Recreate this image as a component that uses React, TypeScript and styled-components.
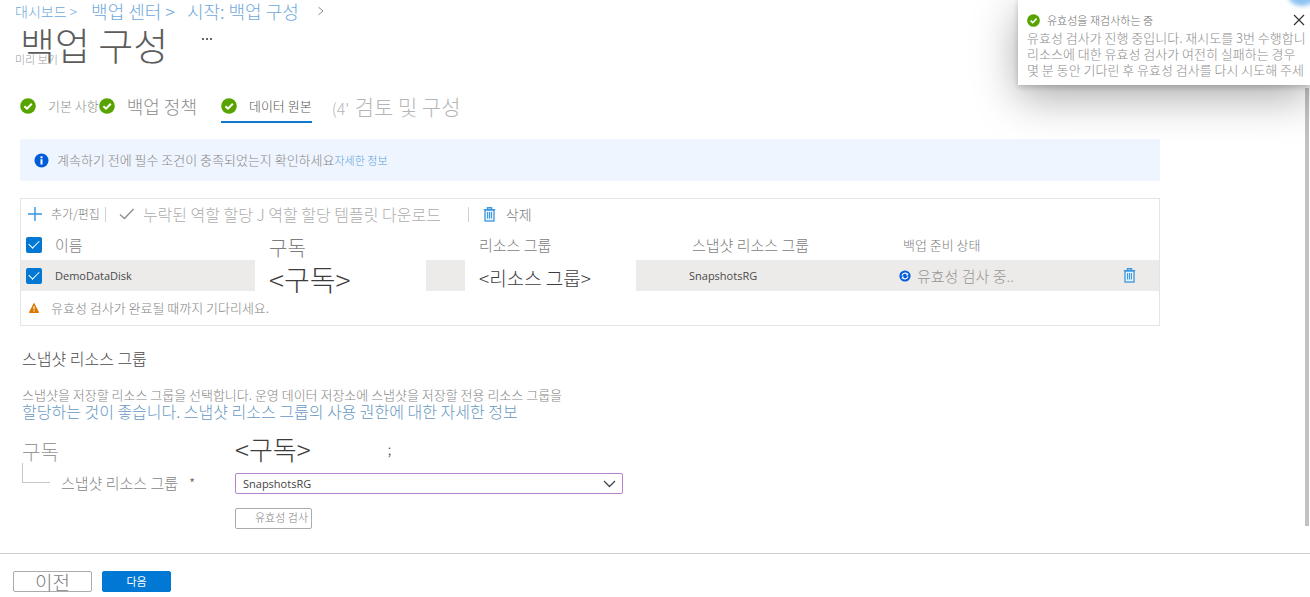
import React from 'react';
import styled, { createGlobalStyle } from 'styled-components';

const Global = createGlobalStyle`
  * { box-sizing: border-box; }
  html, body { margin: 0; padding: 0; background: #fff; }
  body {
    font-family: "Noto Sans CJK KR", sans-serif;
    font-weight: 300;
    color: #858585;
    overflow: hidden;
  }
  button, select, input { font-family: inherit; font-weight: inherit; }
  a { text-decoration: none; color: inherit; }
`;

type TextProps = { $size: number; $color?: string };

const Text = styled.span<TextProps>`
  font-size: ${(p) => p.$size}px;
  line-height: 20px;
  color: ${(p) => p.$color ?? 'inherit'};
  white-space: nowrap;
`;

const Page = styled.div`
  position: relative;
  display: flex;
  flex-direction: column;
  min-height: 100vh;
  overflow: hidden;
`;

const Main = styled.main`
  flex: 1;
  padding-right: 150px;
`;

const Breadcrumb = styled.nav`
  display: flex;
  align-items: center;
  height: 22px;
  padding-left: 15px;
  color: #6fa9dc;
  svg { margin-left: 18px; }
`;

const Crumb = styled.a<{ $size: number; $gap?: number }>`
  font-size: ${(p) => p.$size}px;
  line-height: 22px;
  margin-right: ${(p) => p.$gap ?? 0}px;
  white-space: nowrap;
`;

const TitleRow = styled.header`
  display: flex;
  align-items: flex-start;
  padding-left: 20px;
`;

const Title = styled.h1`
  margin: 0;
  font-size: 38px;
  font-weight: 300;
  line-height: 44px;
  color: #5c5c5c;
`;

const MoreButton = styled.button`
  margin: 7px 0 0 33px;
  padding: 0;
  border: 0;
  background: none;
  display: flex;
  height: 20px;
  align-items: center;
`;

const Preview = styled.div`
  margin-top: -14px;
  padding-left: 15px;
  font-size: 11px;
  line-height: 14px;
  color: #999;
`;

const Tabs = styled.nav`
  display: flex;
  height: 28px;
  margin: 29px 0 16px 20px;
`;

const Tab = styled.a<{ $size: number; $gap?: number; $active?: boolean; $color?: string }>`
  display: flex;
  align-items: center;
  height: 28px;
  padding-bottom: 4px;
  margin-right: ${(p) => p.$gap ?? 0}px;
  border-bottom: 2px solid ${(p) => (p.$active ? '#0f78d0' : 'transparent')};
  font-size: ${(p) => p.$size}px;
  line-height: 22px;
  color: ${(p) => p.$color ?? '#8c8c8c'};
  white-space: nowrap;
  svg { margin-right: 12px; }
`;

const StepNumber = styled.span`
  width: 23px;
`;

const Section = styled.div`
  max-width: 1140px;
  margin-left: 20px;
`;

const Banner = styled(Section)`
  display: flex;
  align-items: center;
  height: 42px;
  padding-left: 14px;
  background: #eff5ff;
  border-radius: 2px;
  svg { margin-right: 8px; }
`;

const Panel = styled(Section)`
  margin-top: 17px;
  height: 128px;
  border: 1px solid #e4e4e4;
`;

const Toolbar = styled.div`
  display: flex;
  align-items: center;
  height: 30px;
`;

const ToolButton = styled.button<{ $size: number; $gap: number; $color?: string }>`
  display: flex;
  align-items: center;
  gap: ${(p) => p.$gap}px;
  padding: 0;
  border: 0;
  background: none;
  font-size: ${(p) => p.$size}px;
  line-height: 20px;
  color: ${(p) => p.$color ?? '#7d7d7d'};
  white-space: nowrap;
`;

const AddButton = styled(ToolButton)`
  padding-left: 7px;
`;

const Divider = styled.span<{ $before: number; $after: number }>`
  width: 1px;
  height: 15px;
  background: #d2d2d2;
  margin: 0 ${(p) => p.$after}px 0 ${(p) => p.$before}px;
`;

const Table = styled.table`
  width: 100%;
  table-layout: fixed;
  border-collapse: collapse;
`;

const Col = styled.col<{ $width: number }>`
  width: ${(p) => p.$width}px;
`;

const HeadCell = styled.th<{ $size: number; $pad: number }>`
  height: 31px;
  padding: ${(p) => (p.$size === 20 ? 6 : 0)}px 0 0 ${(p) => p.$pad}px;
  font-size: ${(p) => p.$size}px;
  font-weight: 300;
  line-height: 20px;
  text-align: left;
  white-space: nowrap;
  color: #7d7d7d;
`;

const Cell = styled.td<{ $pad?: number }>`
  height: 31px;
  padding: 0 0 0 ${(p) => p.$pad ?? 0}px;
  background: #ecebe9;
  white-space: nowrap;
`;

const Latin = styled.div`
  font: 400 11px/20px "Open Sans", sans-serif;
  color: #4a4a4a;
`;

const Redacted = styled.div<{ $size: number; $top: number }>`
  width: 171px;
  height: 31px;
  padding: ${(p) => p.$top}px 0 0 14px;
  background: #fff;
  font-size: ${(p) => p.$size}px;
  line-height: 31px;
  color: #3d3d3d;
`;

const Inline = styled.div<{ $gap: number }>`
  display: flex;
  align-items: center;
  gap: ${(p) => p.$gap}px;
`;

const IconButton = styled.button`
  display: flex;
  padding: 0;
  border: 0;
  background: none;
`;

const Check = styled.input`
  appearance: none;
  width: 16px;
  height: 16px;
  margin: 0;
  border-radius: 2px;
  background: #0078d4;
  display: grid;
  place-items: center;
  &::after {
    content: "";
    width: 9px;
    height: 5px;
    margin-bottom: 3px;
    border-left: 1px solid #fff;
    border-bottom: 1px solid #fff;
    transform: rotate(-45deg);
  }
`;

const Warning = styled.div`
  display: flex;
  align-items: center;
  gap: 12px;
  height: 34px;
  padding-left: 8px;
`;

const Details = styled.section`
  padding: 21px 0 0 22px;
`;

const SubHeading = styled.h2`
  margin: 0 0 18px;
  font-size: 16px;
  font-weight: 300;
  line-height: 22px;
  color: #4a4a4a;
`;

const Para = styled.p`
  display: flex;
  flex-direction: column;
  margin: 0;
  line-height: 16px;
  font-size: 13px;
  white-space: nowrap;
  a { font-size: 16px; color: #6899c2; }
`;

const Form = styled.form`
  display: grid;
  grid-template-columns: 213px minmax(100px, 388px);
  grid-template-rows: 39px 24px;
  margin-top: 15px;
`;

const GroupLabel = styled.span`
  padding-top: 7px;
  font-size: 20px;
  line-height: 22px;
  color: #999;
`;

const Value = styled.div`
  display: flex;
  align-items: center;
  gap: 77px;
  height: 30px;
  font-size: 26px;
  line-height: 30px;
  color: #3d3d3d;
`;

const NestedLabel = styled.label`
  display: flex;
  align-items: flex-start;
  gap: 11px;
  height: 32px;
  font-size: 15px;
  line-height: 20px;
  white-space: nowrap;
`;

const Required = styled.span`
  font-size: 14px;
  color: #5c5c5c;
`;

const Branch = styled.span`
  width: 28px;
  height: 20px;
  margin-top: -10px;
  border-left: 1px solid #c8c8c8;
  border-bottom: 1px solid #c8c8c8;
`;

const SelectWrap = styled.div`
  display: grid;
  align-items: center;
  height: 21px;
  > * { grid-area: 1 / 1; }
  svg { justify-self: end; margin-right: 7px; pointer-events: none; }
`;

const Select = styled.select`
  appearance: none;
  width: 100%;
  height: 21px;
  padding: 0 24px 0 7px;
  border: 1px solid #b583cc;
  border-radius: 2px;
  background: #fff;
  font: 400 11px/18px "Open Sans", sans-serif;
  color: #444;
`;

const Button = styled.button<{ $width: number; $size: number; $primary?: boolean }>`
  width: ${(p) => p.$width}px;
  height: 21px;
  padding: 0;
  border: 1px solid ${(p) => (p.$primary ? '#0078d4' : '#ababab')};
  border-radius: 2px;
  background: ${(p) => (p.$primary ? '#0078d4' : '#fff')};
  color: ${(p) => (p.$primary ? '#fff' : '#7d7d7d')};
  font-size: ${(p) => p.$size}px;
  font-weight: ${(p) => (p.$primary ? 400 : 300)};
  line-height: 17px;
  white-space: nowrap;
`;

const ValidateButton = styled(Button)`
  grid-column: 2;
  margin-top: 11px;
  padding: 0 3px 2px 0;
  text-align: right;
`;

const Footer = styled.footer`
  display: flex;
  gap: 10px;
  height: 44px;
  padding: 17px 0 0 13px;
  border-top: 1px solid #cfcfcf;
`;

const Toast = styled.aside`
  position: absolute;
  top: 0;
  right: 0;
  width: 292px;
  height: 85px;
  padding: 11px 0 0 9px;
  background: #fff;
  box-shadow: 0 12px 44px rgba(0, 0, 0, 0.34), 0 2px 6px rgba(0, 0, 0, 0.2);
  overflow: hidden;
`;

const ToastHead = styled.div`
  display: flex;
  align-items: center;
  height: 18px;
  padding-right: 5px;
  svg { flex: none; }
  span { margin-left: 7px; flex: 1; }
`;

const ToastBody = styled.p`
  margin: 1px 0 0;
  font-size: 13px;
  line-height: 16px;
  white-space: pre;
  color: #8c8c8c;
`;

const Glow = styled.span`
  position: absolute;
  top: -16px;
  right: -6px;
  width: 28px;
  height: 22px;
  border-radius: 50%;
  background: #8ec4f0;
  filter: blur(2px);
`;

const ScrollBar = styled.div`
  position: absolute;
  top: 88px;
  right: 1px;
  bottom: 71px;
  width: 4px;
  background: #c2c2c2;
`;

const Done = ({ size = 16 }: { size?: number }) => (
  <svg width={size} height={size} viewBox="0 0 16 16" aria-hidden>
    <circle cx="8" cy="8" r="7.8" fill="#57a300" />
    <path d="M4.4 8.2 7 10.7l4.8-5" fill="none" stroke="#fff" strokeWidth="2" />
  </svg>
);

const Trash = () => (
  <svg width="13" height="15" viewBox="0 0 13 15" aria-hidden>
    <rect x="2" y="3" width="9" height="11" fill="#e8f4fd" stroke="#3b96dc" strokeWidth="1.3" />
    <path d="M.8 2.6h11.4M4.5 2.2V.8h4v1.4" fill="none" stroke="#3b96dc" strokeWidth="1.4" />
    <path d="M4.6 5v6.5M6.5 5v6.5M8.4 5v6.5" stroke="#3b96dc" strokeWidth="1.1" />
  </svg>
);

export default function App() {
  return (
    <>
      <Global />
      <Page>
        <Main>
          <Breadcrumb>
            <Crumb $size={14} $gap={14} href="#">대시보드 &gt;</Crumb>
            <Crumb $size={18} $gap={12} href="#">백업 센터 &gt;</Crumb>
            <Crumb $size={18} href="#">시작: 백업 구성</Crumb>
            <svg width="8" height="10" viewBox="0 0 8 10" aria-hidden>
              <path d="M1.5 1.2 6 5 1.5 8.8" fill="none" stroke="#8a8a8a" />
            </svg>
          </Breadcrumb>
          <TitleRow>
            <Title>백업 구성</Title>
            <MoreButton type="button" aria-label="More">
              <svg width="12" height="4" viewBox="0 0 12 4" fill="#666" aria-hidden>
                <rect x="1" y="1" width="2" height="2" /><rect x="5" y="1" width="2" height="2" /><rect x="9" y="1" width="2" height="2" />
              </svg>
            </MoreButton>
          </TitleRow>
          <Preview>미리 보기</Preview>

          <Tabs>
            <Tab $size={13} href="#"><Done />기본 사항</Tab>
            <Tab $size={18} $gap={24} href="#"><Done />백업 정책</Tab>
            <Tab $size={13} $gap={20} $active $color="#555" href="#"><Done />데이터 원본</Tab>
            <Tab $size={21} $color="#b5b5b5" href="#">
              <StepNumber><Text $size={16}>(4'</Text></StepNumber>검토 및 구성
            </Tab>
          </Tabs>

          <Banner>
            <svg width="15" height="15" viewBox="0 0 15 15" aria-hidden>
              <circle cx="7.5" cy="7.5" r="7" fill="#015cda" />
              <path d="M7.5 6.3v5.2M7.5 3.3v1.9" stroke="#fff" strokeWidth="2" />
            </svg>
            <Text $size={13}>계속하기 전에 필수 조건이 충족되었는지 확인하세요</Text>
            <Text as="a" href="#" $size={11} $color="#5a9fdb">자세한 정보</Text>
          </Banner>

          <Panel>
            <Toolbar>
              <AddButton type="button" $size={12} $gap={9}>
                <svg width="14" height="14" viewBox="0 0 14 14" aria-hidden>
                  <path d="M7 0v14M0 7h14" stroke="#3595e0" strokeWidth="1.4" />
                </svg>
                추가/편집
              </AddButton>
              <Divider $before={5} $after={13} />
              <ToolButton type="button" $size={16} $gap={8} $color="#adadad">
                <svg width="16" height="12" viewBox="0 0 16 12" aria-hidden>
                  <path d="m1 6.5 4.5 4L14.5 1" fill="none" stroke="#8f8f8f" strokeWidth="1.4" />
                </svg>
                누락된 역할 할당 J 역할 할당 템플릿 다운로드
              </ToolButton>
              <Divider $before={27} $after={14} />
              <ToolButton type="button" $size={14} $gap={10}><Trash />삭제</ToolButton>
            </Toolbar>
            <Table>
              <colgroup>
                <Col $width={34} />
                <Col $width={200} />
                <Col $width={210} />
                <Col $width={171} />
                <Col $width={263} />
                <Col $width={205} />
                <col />
              </colgroup>
              <thead>
                <tr>
                  <HeadCell $size={15} $pad={5}><Check type="checkbox" defaultChecked aria-label="모두" /></HeadCell>
                  <HeadCell $size={15} $pad={0}>이름</HeadCell>
                  <HeadCell $size={20} $pad={14}>구독</HeadCell>
                  <HeadCell $size={15} $pad={14}>리소스 그룹</HeadCell>
                  <HeadCell $size={15} $pad={56}>스냅샷 리소스 그룹</HeadCell>
                  <HeadCell $size={13} $pad={4}>백업 준비 상태</HeadCell>
                  <HeadCell as="td" $size={13} $pad={0} />
                </tr>
              </thead>
              <tbody>
                <tr>
                  <Cell $pad={5}><Check type="checkbox" defaultChecked aria-label="DemoDataDisk" /></Cell>
                  <Cell><Latin>DemoDataDisk</Latin></Cell>
                  <Cell><Redacted $size={28} $top={4}>&lt;구독&gt;</Redacted></Cell>
                  <Cell><Redacted $size={19} $top={2}>&lt;리소스 그룹&gt;</Redacted></Cell>
                  <Cell $pad={53}><Latin>SnapshotsRG</Latin></Cell>
                  <Cell>
                    <Inline $gap={6}>
                      <svg width="12" height="12" viewBox="0 0 12 12" aria-hidden>
                        <circle cx="6" cy="6" r="5.6" fill="#015cda" />
                        <path d="M3 5.6A3.1 3.1 0 0 1 8.2 4M9 6.4A3.1 3.1 0 0 1 3.8 8" fill="none" stroke="#fff" strokeWidth="1.2" />
                        <path d="M9.2 2.8v2.6H6.7zM2.8 9.2V6.6h2.5z" fill="#fff" />
                      </svg>
                      <Text $size={15} $color="#969696">유효성 검사 중..</Text>
                    </Inline>
                  </Cell>
                  <Cell $pad={19}><IconButton type="button" aria-label="삭제"><Trash /></IconButton></Cell>
                </tr>
              </tbody>
            </Table>
            <Warning>
              <svg width="10" height="10" viewBox="0 0 10 10" aria-hidden>
                <path d="M5 .5 9.6 9.5H.4z" fill="#db7500" stroke="#db7500" strokeLinejoin="round" />
                <path d="M5 3.2v3M5 7.2v1.2" stroke="#fff" strokeWidth="1.2" />
              </svg>
              <Text $size={13}>유효성 검사가 완료될 때까지 기다리세요.</Text>
            </Warning>
          </Panel>

          <Details>
            <SubHeading>스냅샷 리소스 그룹</SubHeading>
            <Para>
              <span>스냅샷을 저장할 리소스 그룹을 선택합니다. 운영 데이터 저장소에 스냅샷을 저장할 전용 리소스 그룹을</span>
              <a href="#">할당하는 것이 좋습니다. 스냅샷 리소스 그룹의 사용 권한에 대한 자세한 정보</a>
            </Para>
            <Form onSubmit={(e) => e.preventDefault()}>
              <GroupLabel>구독</GroupLabel>
              <Value>&lt;구독&gt;<Text $size={14}>;</Text></Value>
              <NestedLabel htmlFor="rg"><Branch />스냅샷 리소스 그룹<Required>*</Required></NestedLabel>
              <SelectWrap>
                <Select id="rg"><option>SnapshotsRG</option></Select>
                <svg width="13" height="8" viewBox="0 0 13 8" aria-hidden>
                  <path d="m1 1 5.5 5.5L12 1" fill="none" stroke="#444" strokeWidth="1.3" />
                </svg>
              </SelectWrap>
              <ValidateButton type="button" $width={77} $size={11}>유효성 검사</ValidateButton>
            </Form>
          </Details>
        </Main>

        <Footer>
          <Button type="button" $width={79} $size={19}>이전</Button>
          <Button type="button" $width={69} $size={11} $primary>다음</Button>
        </Footer>

        <ScrollBar />
        <Toast role="status">
          <Glow />
          <ToastHead>
            <Done size={13} />
            <Text $size={11} $color="#6e6e6e">유효성을 재검사하는 중</Text>
            <IconButton type="button" aria-label="닫기">
              <svg width="12" height="12" viewBox="0 0 12 12" aria-hidden>
                <path d="m1 1 10 10M11 1 1 11" stroke="#333" strokeWidth="1.2" />
              </svg>
            </IconButton>
          </ToastHead>
          <ToastBody>{'유효성 검사가 진행 중입니다. 재시도를 3번 수행합니\n리소스에 대한 유효성 검사가 여전히 실패하는 경우\n몇 분 동안 기다린 후 유효성 검사를 다시 시도해 주세'}</ToastBody>
        </Toast>
      </Page>
    </>
  );
}
